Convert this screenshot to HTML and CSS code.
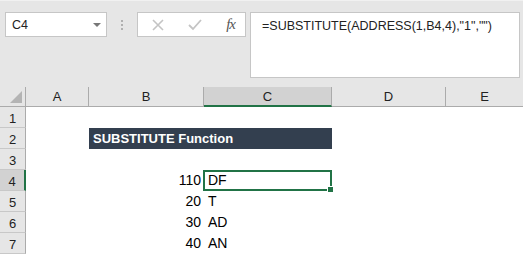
FILE: index.html
```html
<!DOCTYPE html>
<html lang="en">
<head>
    <meta charset="UTF-8">
    <title>SUBSTITUTE Function</title>
    <link rel="stylesheet" href="styles.css">
</head>
<body>
    <div class="topbar">
        <div class="namebox">
            <span>C4</span>
            <span class="drop"></span>
        </div>
        <div class="grip"><i></i><i></i><i></i></div>
        <div class="fxbox">
            <svg width="12" height="12" viewBox="0 0 12 12"><path d="M1 1 L11 11 M11 1 L1 11" stroke="#c4c4c4" stroke-width="1.6" fill="none"/></svg>
            <svg width="14" height="12" viewBox="0 0 14 12"><path d="M1 6 L5 10 L13 1" stroke="#c4c4c4" stroke-width="1.8" fill="none"/></svg>
            <span class="fx">fx</span>
        </div>
        <div class="formula">=SUBSTITUTE(ADDRESS(1,B4,4),"1","")</div>
    </div>

    <div class="sheet">
        <div class="hd corner"><span class="tri"></span></div>
        <div class="hd col">A</div>
        <div class="hd col">B</div>
        <div class="hd col active">C</div>
        <div class="hd col">D</div>
        <div class="hd col last">E</div>

        <div class="hd row">1</div>
        <div class="cell"></div><div class="cell"></div><div class="cell"></div><div class="cell"></div><div class="cell"></div>

        <div class="hd row">2</div>
        <div class="cell"></div>
        <div class="cell title">SUBSTITUTE Function</div>
        <div class="cell"></div><div class="cell"></div>

        <div class="hd row">3</div>
        <div class="cell"></div><div class="cell"></div><div class="cell"></div><div class="cell"></div><div class="cell"></div>

        <div class="hd row active">4</div>
        <div class="cell"></div>
        <div class="cell num">110</div>
        <div class="cell txt selected">DF<span class="handle"></span></div>
        <div class="cell"></div><div class="cell"></div>

        <div class="hd row">5</div>
        <div class="cell"></div>
        <div class="cell num">20</div>
        <div class="cell txt">T</div>
        <div class="cell"></div><div class="cell"></div>

        <div class="hd row">6</div>
        <div class="cell"></div>
        <div class="cell num">30</div>
        <div class="cell txt">AD</div>
        <div class="cell"></div><div class="cell"></div>

        <div class="hd row">7</div>
        <div class="cell"></div>
        <div class="cell num">40</div>
        <div class="cell txt">AN</div>
        <div class="cell"></div><div class="cell"></div>
    </div>
</body>
</html>
```

FILE: styles.css
```css
body {
    margin: 0;
    padding: 0;
    background: #e6e6e6;
    font-family: 'Liberation Sans', Arial, sans-serif;
    color: #000;
    overflow: hidden;
}

.topbar {
    display: flex;
    align-items: flex-start;
    height: 87px;
    box-sizing: border-box;
    padding: 11px 0 0 5px;
    border-top: 1px solid #f1f1f1;
}

.namebox {
    width: 102px;
    height: 25px;
    box-sizing: border-box;
    background: white;
    border: 1px solid #c6c6c6;
    display: flex;
    align-items: center;
    justify-content: space-between;
    padding: 0 5px 0 6px;
    font-size: 12.5px;
    color: #222;
}

.drop {
    width: 0;
    height: 0;
    border-left: 4px solid transparent;
    border-right: 4px solid transparent;
    border-top: 4px solid #777;
}

.grip {
    width: 30px;
    height: 25px;
    display: flex;
    flex-direction: column;
    align-items: center;
    justify-content: center;
    gap: 2px;
}

.grip i {
    width: 2px;
    height: 2px;
    background: #b0b0b0;
}

.fxbox {
    width: 109px;
    height: 25px;
    box-sizing: border-box;
    background: white;
    border: 1px solid #c6c6c6;
    display: flex;
    align-items: center;
    justify-content: space-between;
    padding: 0 10px 0 14px;
}

.fx {
    font-family: 'Liberation Serif', serif;
    font-style: italic;
    font-size: 15px;
    color: #555;
    letter-spacing: -1px;
}

.formula {
    margin-left: 4px;
    width: 270px;
    height: 66px;
    box-sizing: border-box;
    background: white;
    border: 1px solid #c6c6c6;
    padding: 6px 0 0 11px;
    font-size: 12.5px;
    color: #222;
}

.sheet {
    display: grid;
    grid-template-columns: 26px 63px 115px 128px 114px 1fr;
    grid-template-rows: 20px repeat(7, 21px);
    background: white;
}

.hd {
    background: #e6e6e6;
    color: #222;
    font-size: 13px;
    display: flex;
    align-items: center;
    justify-content: center;
    box-sizing: border-box;
}

.hd.col {
    border-right: 1px solid #ababab;
    border-bottom: 1px solid #ababab;
}

.hd.col.last {
    border-right: none;
}

.hd.corner {
    border-right: 1px solid #ababab;
    border-bottom: 1px solid #ababab;
    position: relative;
}

.tri {
    position: absolute;
    right: 3px;
    bottom: 3px;
    width: 0;
    height: 0;
    border-left: 12px solid transparent;
    border-bottom: 12px solid #b4b4b4;
}

.hd.row {
    border-right: 1px solid #ababab;
    border-bottom: 1px solid #c8c8c8;
    padding-top: 2px;
}

.hd.active {
    background: #d2d2d2;
}

.hd.col.active {
    border-bottom: 2px solid #217346;
}

.hd.row.active {
    border-right: 2px solid #217346;
}

.cell {
    font-size: 14px;
    line-height: 21px;
    white-space: nowrap;
    box-sizing: border-box;
}

.title {
    grid-column: span 2;
    background: #333f4f;
    color: white;
    font-weight: bold;
    font-size: 13px;
    padding-left: 4px;
    line-height: 22px;
}

.num {
    text-align: right;
    padding-right: 3px;
}

.txt {
    padding-left: 4px;
}

.selected {
    position: relative;
    border: 2px solid #217346;
    margin-left: -1px;
    padding-left: 3px;
    line-height: 17px;
}

.handle {
    position: absolute;
    right: -4px;
    bottom: -4px;
    width: 5px;
    height: 5px;
    background: #217346;
    border: 1px solid white;
}
```
